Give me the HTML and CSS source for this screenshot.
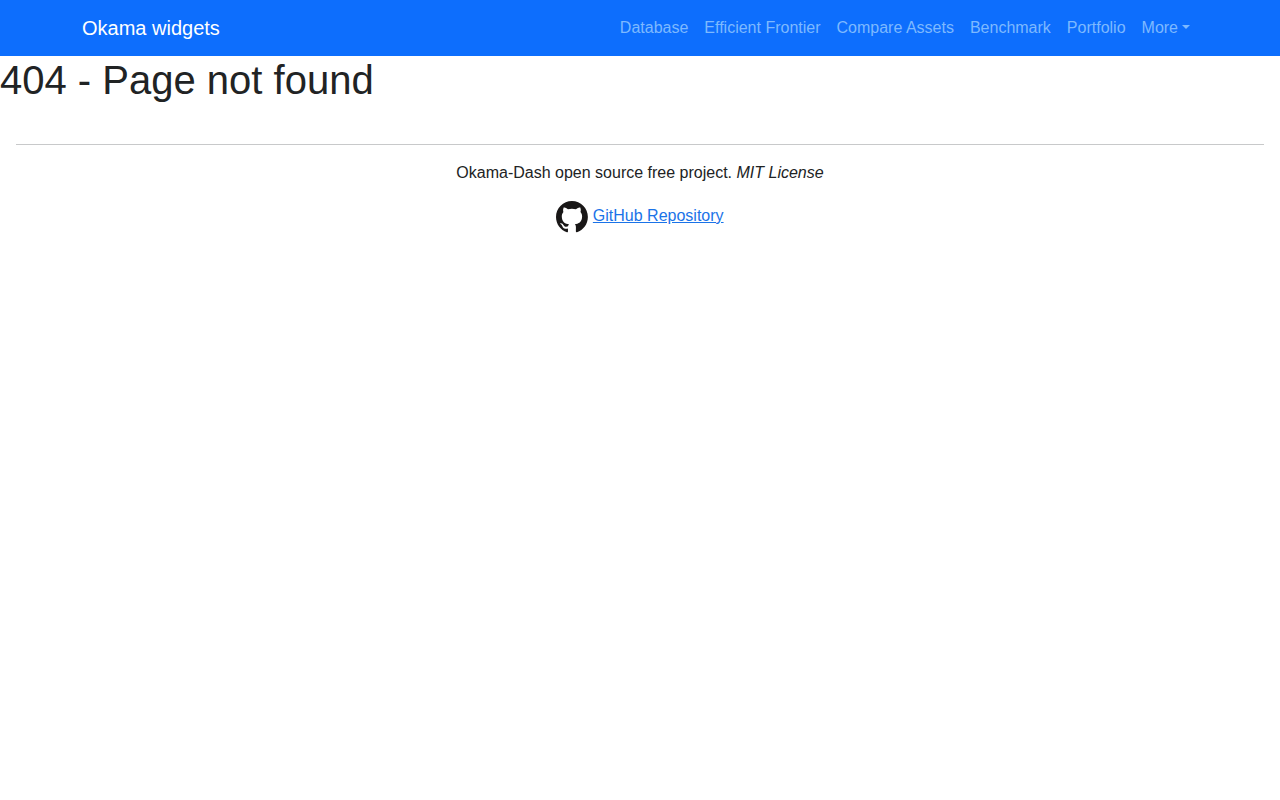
FILE: index.html
```
<!DOCTYPE html>
<html lang="en">
<head>
    <meta charset="UTF-8">
    <meta name="viewport" content="width=device-width, initial-scale=1.0">
    <title>Okama widgets</title>
    <link rel="stylesheet" href="styles.css">
</head>
<body>
    <nav class="navbar">
        <div class="container">
            <a class="navbar-brand" href="#">Okama widgets</a>
            <ul class="navbar-nav">
                <li><a class="nav-link" href="#">Database</a></li>
                <li><a class="nav-link" href="#">Efficient Frontier</a></li>
                <li><a class="nav-link" href="#">Compare Assets</a></li>
                <li><a class="nav-link" href="#">Benchmark</a></li>
                <li><a class="nav-link" href="#">Portfolio</a></li>
                <li><button class="nav-link dropdown-toggle" type="button">More</button></li>
            </ul>
        </div>
    </nav>
    <main>
        <h1>404 - Page not found</h1>
    </main>
    <footer class="footer">
        <hr>
        <p>Okama-Dash open source free project. <em>MIT License</em></p>
        <p>
            <svg class="github-logo" viewBox="0 0 98 98" aria-hidden="true">
                <path fill-rule="evenodd" clip-rule="evenodd" d="M48.854 0C21.839 0 0 22 0 49.217c0 21.756 13.993 40.172 33.405 46.69 2.427.49 3.316-1.059 3.316-2.362 0-1.141-.08-5.052-.08-9.127-13.59 2.934-16.42-5.867-16.42-5.867-2.184-5.704-5.42-7.17-5.42-7.17-4.448-3.015.324-3.015.324-3.015 4.934.326 7.523 5.052 7.523 5.052 4.367 7.496 11.404 5.378 14.235 4.074.404-3.178 1.699-5.378 3.074-6.6-10.839-1.141-22.243-5.378-22.243-24.283 0-5.378 1.94-9.778 5.014-13.2-.485-1.222-2.184-6.275.486-13.038 0 0 4.125-1.304 13.426 5.052a46.97 46.97 0 0 1 12.214-1.63c4.125 0 8.33.571 12.213 1.63 9.302-6.356 13.427-5.052 13.427-5.052 2.67 6.763.97 11.816.485 13.038 3.155 3.422 5.015 7.822 5.015 13.2 0 18.905-11.404 23.06-22.324 24.283 1.78 1.548 3.316 4.481 3.316 9.126 0 6.6-.08 11.897-.08 13.526 0 1.304.89 2.853 3.316 2.364 19.412-6.52 33.405-24.935 33.405-46.691C97.707 22 75.788 0 48.854 0z"/>
            </svg>
            <a href="#">GitHub Repository</a>
        </p>
    </footer>
</body>
</html>
```

FILE: styles.css
```
* {
    box-sizing: border-box;
}
body {
    font-family: "Liberation Sans", Arial, sans-serif;
    font-size: 16px;
    line-height: 24px;
    color: #212324;
    background-color: #fff;
    margin: 0;
}
.navbar {
    background-color: #0d6efd;
    padding: 8px 0;
}
.container {
    display: flex;
    align-items: center;
    justify-content: space-between;
    max-width: 1140px;
    margin: 0 auto;
    padding: 0 12px;
}
.navbar-brand {
    font-size: 20px;
    color: #fff;
    text-decoration: none;
}
.navbar-nav {
    display: flex;
    list-style: none;
    margin: 0;
    padding: 0;
}
.nav-link {
    display: block;
    font: inherit;
    color: #7db9ff;
    text-decoration: none;
    background: none;
    border: none;
    padding: 8px;
    cursor: pointer;
}
.dropdown-toggle::after {
    content: "";
    display: inline-block;
    margin-left: 4px;
    vertical-align: 4px;
    border-top: 4px solid;
    border-left: 4px solid transparent;
    border-right: 4px solid transparent;
}
h1 {
    font-size: 40px;
    font-weight: normal;
    line-height: 48px;
    margin: 0 0 8px;
}
.footer {
    text-align: center;
    padding: 16px;
}
.footer hr {
    border: none;
    border-top: 1px solid #c8c9ca;
    margin: 16px 0;
}
.footer p {
    margin: 0 0 16px;
}
.footer a {
    color: #1a73e8;
}
.github-logo {
    width: 32px;
    height: 32px;
    vertical-align: middle;
    fill: #191717;
}
```
